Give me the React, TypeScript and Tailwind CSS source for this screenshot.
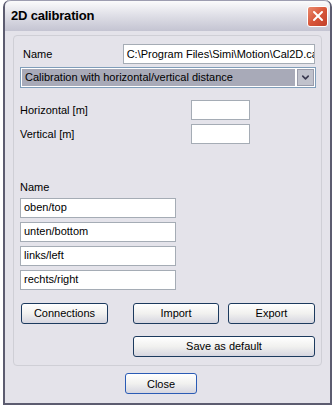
import { ChevronDown, X } from 'lucide-react'

const font = { fontFamily: '"Liberation Sans", Arial, sans-serif' }

function Field({ value, className = '' }: { value?: string; className?: string }) {
  return (
    <div
      className={`h-[20px] bg-white border border-[#a5acb5] px-[3px] flex items-center text-[11px] text-black whitespace-nowrap overflow-hidden ${className}`}
    >
      {value}
    </div>
  )
}

function Btn({ label, className = '' }: { label: string; className?: string }) {
  return (
    <button
      className={`h-[21px] rounded-[3px] border border-[#1c3a5e] bg-gradient-to-b from-white via-[#f1f1ef] to-[#d6d6e0] text-[11px] text-black flex items-center justify-center pt-[1px] ${className}`}
    >
      {label}
    </button>
  )
}

export default function App() {
  return (
    <div className="w-[335px] h-[407px] bg-white relative overflow-hidden" style={font}>
      <div className="absolute left-[3px] top-0 w-[329px] h-[405px] border-l-2 border-r-2 border-b-2 border-[#5c5c70] rounded-t-[7px] bg-[#e4e3ea] flex flex-col">
        {/* title bar */}
        <div className="h-[31px] shrink-0 rounded-t-[6px] bg-gradient-to-b from-[#fbfbfc] via-[#dedee6] to-[#c4c4d2] flex items-center pl-[6px] pr-[2px] border-t border-[#9d9db0]">
          <span className="font-bold text-[13px] text-black flex-1 tracking-[-0.2px]">2D calibration</span>
          <div className="w-[21px] h-[21px] rounded-[3px] border border-white bg-gradient-to-br from-[#e88a6e] via-[#d8563a] to-[#c1402b] flex items-center justify-center">
            <X size={16} strokeWidth={3} className="text-white" />
          </div>
        </div>

        {/* body */}
        <div className="flex-1 px-[8px] pt-[4px] pb-[10px] flex flex-col">
          <div className="h-[331px] rounded-[4px] border border-[#cfcfd6] px-[6px] pt-[8px] flex flex-col">
            <div className="flex items-center">
              <span className="text-[11px] w-[103px] pl-[3px]">Name</span>
              <Field value="C:\Program Files\Simi\Motion\Cal2D.cal" className="w-[193px]" />
            </div>
            <div className="mt-[3px] h-[21px] w-[296px] border border-[#7f9db9] bg-white p-[1px] flex">
              <div className="flex-1 bg-[#a8aab8] text-[11px] flex items-center pl-[3px]">
                Calibration with horizontal/vertical distance
              </div>
              <div className="w-[17px] ml-[2px] bg-[#c0c2cc] border border-[#9a9cab] flex items-center justify-center">
                <ChevronDown size={11} strokeWidth={3.5} className="text-[#3a3a50]" />
              </div>
            </div>

            <div className="mt-[12px] flex items-center">
              <span className="text-[11px] w-[171px]">Horizontal [m]</span>
              <Field className="w-[59px]" />
            </div>
            <div className="mt-[4px] flex items-center">
              <span className="text-[11px] w-[171px]">Vertical [m]</span>
              <Field className="w-[59px]" />
            </div>

            <div className="mt-[35px] text-[11px]">Name</div>
            <div className="mt-[2px] flex flex-col gap-[4px]">
              <Field value="oben/top" className="w-[156px]" />
              <Field value="unten/bottom" className="w-[156px]" />
              <Field value="links/left" className="w-[156px]" />
              <Field value="rechts/right" className="w-[156px]" />
            </div>

            <div className="mt-[13px] flex">
              <Btn label="Connections" className="w-[87px] ml-[1px]" />
              <Btn label="Import" className="w-[86px] ml-[25px]" />
              <Btn label="Export" className="w-[87px] ml-[9px]" />
            </div>
            <div className="mt-[12px] flex">
              <Btn label="Save as default" className="w-[183px] ml-[113px]" />
            </div>
          </div>

          <div className="mt-[7px] flex">
            <Btn label="Close" className="w-[72px] ml-[112px] border-[#2a5bb5]" />
          </div>
        </div>
      </div>
    </div>
  )
}
